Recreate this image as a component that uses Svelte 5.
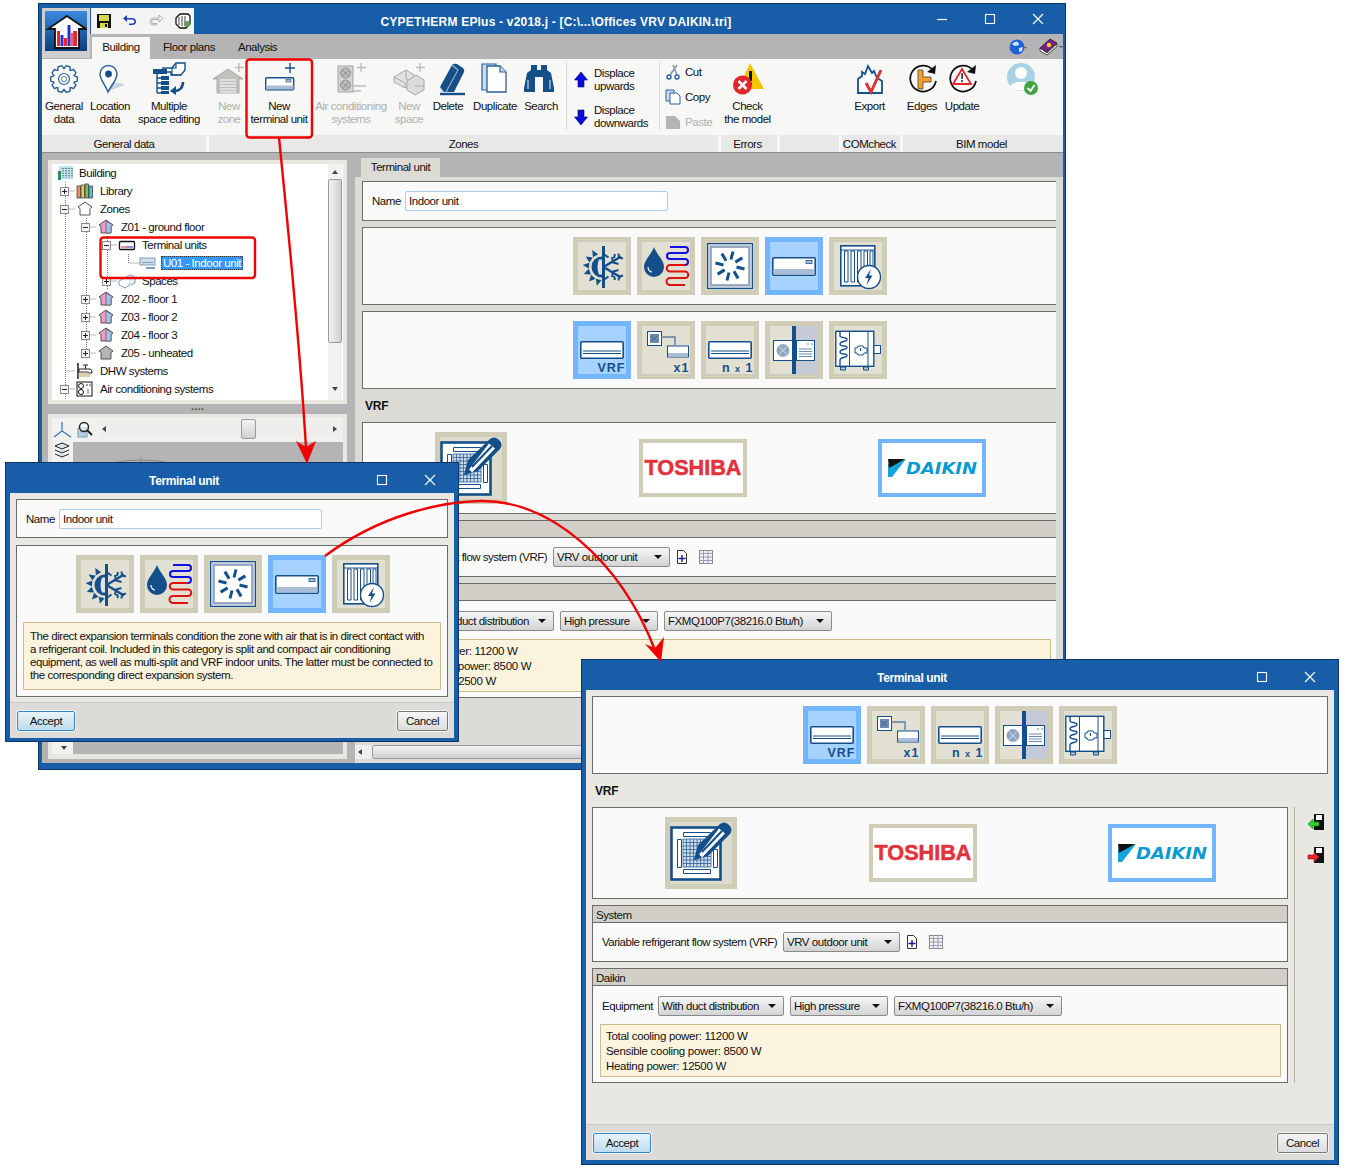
<script>
  const B = '#154f8a';
  const tree = [
    { x: 0, exp: '', icon: 'bld', text: 'Building' },
    { x: 1, exp: '+', icon: 'lib', text: 'Library' },
    { x: 1, exp: '-', icon: 'home', text: 'Zones' },
    { x: 2, exp: '-', icon: 'pink', text: 'Z01 - ground floor' },
    { x: 3, exp: '-', icon: 'term', text: 'Terminal units' },
    { x: 4, exp: '', icon: 'vrf', text: 'U01 - Indoor unit', sel: true },
    { x: 3, exp: '+', icon: 'cube', text: 'Spaces' },
    { x: 2, exp: '+', icon: 'pink', text: 'Z02 - floor 1' },
    { x: 2, exp: '+', icon: 'pink', text: 'Z03 - floor 2' },
    { x: 2, exp: '+', icon: 'pink', text: 'Z04 - floor 3' },
    { x: 2, exp: '+', icon: 'grey', text: 'Z05 - unheated' },
    { x: 1, exp: '', icon: 'tap', text: 'DHW systems' },
    { x: 1, exp: '-', icon: 'ac', text: 'Air conditioning systems' }
  ];

  // teeth of the gear on the ribbon
  function gearPath(cx, cy, r1, r2, n) {
    let d = '';
    for (let i = 0; i < n; i++) {
      const a = (i * 2 * Math.PI) / n;
      const w = Math.PI / n;
      const pts = [[a - w * 0.95, r1], [a - w * 0.5, r2], [a + w * 0.5, r2], [a + w * 0.95, r1]];
      for (const [t, r] of pts) {
        d += (d ? 'L' : 'M') + (cx + r * Math.cos(t)).toFixed(1) + ' ' + (cy + r * Math.sin(t)).toFixed(1);
      }
    }
    return d + 'z';
  }
  const blades = [0, 45, 90, 135, 180, 225, 270, 315];
  const rays = [-165, -138, -111, -84, -57, -30];
</script>

{#snippet gear()}
  <path d={gearPath(20, 19, 10.5, 13.5, 10)} fill="#fff" stroke="#2b6196" stroke-width="1.4" stroke-linejoin="round" />
  <circle cx="20" cy="19" r="5.5" fill="none" stroke="#2b6196" stroke-width="1.2" />
  <circle cx="20" cy="19" r="2.6" fill="none" stroke="#7f9fc0" stroke-width="1.2" />
{/snippet}
{#snippet pin()}
  <path d="M18 31 L35 25 Q30 22 24 23z" fill="#c9d3dd" />
  <path d="M18 32 C15 24 10 20 10 14 a8.500 8.500 0 0 1 17 0 C27 20 22 24 18 32z" fill="#fff" stroke="#2b6196" stroke-width="1.5" />
  <circle cx="18.500" cy="14" r="3.400" fill={B} />
{/snippet}
{#snippet multi()}
  <path d="M14 8h9l4-5h9v7l-4 5H22v-3h-8z" fill="#fff" stroke={B} stroke-width="1.4" />
  <path d="M23 8v7h9M27 3v5h-4" fill="none" stroke={B} stroke-width="1.2" />
  <path d="M4 9h14v5H4z" fill={B} />
  <path d="M8 14v19M8 18h7M8 23h7M8 28h7M8 33h7" stroke={B} stroke-width="1.4" fill="none" />
  <path d="M12 16h8v4h-8zM12 21h8v4h-8zM12 26h8v4h-8zM12 31h8v3h-8z" fill={B} />
  <path d="M34 22c0 6-4 9-9 9" fill="none" stroke={B} stroke-width="2.6" />
  <path d="M27 26l-6 5 6 4z" fill={B} />
{/snippet}
{#snippet newZone()}
  <path d="M19 9L4 19h4v14h22V19h4z" fill="#c0c0bc" stroke="#a9a9a6" />
  <path d="M11 20h16M11 23h16M11 26h16M11 29h16M11 32h16" stroke="#fff" stroke-width="1.2" />
  <path d="M30 3v9M26 7.500h9" stroke="#bcbcbc" stroke-width="1.4" fill="none" />
{/snippet}
{#snippet newUnit()}
  <path d="M31 3v10M26 8h10" stroke={B} stroke-width="1.4" fill="none" />
  <rect x="6.700" y="17.700" width="28" height="12" rx="1" fill="#fff" stroke={B} stroke-width="1.400" />
  <rect x="7" y="25.500" width="27.500" height="4" fill="#a9bdd6" />
  <rect x="27" y="19.500" width="5" height="2.500" fill="#a9bdd6" stroke={B} stroke-width=".6" />
{/snippet}
{#snippet acSys()}
  <rect x="7" y="6" width="15" height="26" fill="#d4d4d2" stroke="#a6a6a4" />
  <circle cx="14.500" cy="13" r="5" fill="#bcbcba" stroke="#8f8f8d" />
  <circle cx="14.500" cy="25" r="5" fill="#bcbcba" stroke="#8f8f8d" />
  <path d="M11 10l7 6M18 10l-7 6M11 22l7 6M18 22l-7 6" stroke="#8f8f8d" />
  <path d="M22 26h13M22 31h8M30 3v9M26 7.500h9" stroke="#bcbcbc" stroke-width="1.300" fill="none" />
{/snippet}
{#snippet newSpace()}
  <path d="M5 17l12-7 8 5 0 7-9 6-11-6z" fill="#e2e2e0" stroke="#a9a9a7" />
  <path d="M17 10v9l8 4M5 17l11 6v5" fill="none" stroke="#a9a9a7" />
  <path d="M18 21l9-6 8 5v10l-9 5-8-5z" fill="#dcdcda" stroke="#a9a9a7" />
  <path d="M26 26h9" stroke="#a9a9a7" />
  <path d="M31 3v9M27 7.500h9" stroke="#bcbcbc" stroke-width="1.300" fill="none" />
{/snippet}
{#snippet eraser()}
  <path d="M12 27L24 5q2-2 5-1l6 4q2 2 1 4L26 32H14z" fill={B} />
  <path d="M24 5l6 5-12 22" fill="none" stroke="#8fb0d0" stroke-width="1.200" />
  <path d="M12 27l4 5h-4z" fill="#dfe6ee" />
  <path d="M12 34h25" stroke={B} stroke-width="2.400" />
{/snippet}
{#snippet dupl()}
  <path d="M7 4h14v26H7z" fill="#c9dcef" stroke="#2b6196" stroke-width="1.200" />
  <path d="M12 6h13l6 6v20H12z" fill="#fff" stroke="#2b6196" stroke-width="1.300" />
  <path d="M25 6v6h6" fill="#c9dcef" stroke="#2b6196" stroke-width="1.200" />
{/snippet}
{#snippet binoc()}
  <path d="M10 5h6v5h4V5h6v5l4 3 3 15v4H22V17h-8v15H3v-4l3-15 4-3z" fill={B} />
  <path d="M7 20v9M29 20v9" stroke="#7fa3c9" stroke-width="2" />
{/snippet}
{#snippet check()}
  <path d="M22 3L36 29H10z" fill="#f5c400" />
  <path d="M21 11h3v10h-3zM21 23h3v3h-3z" fill="#111" />
  <circle cx="14.500" cy="25" r="9.500" fill="#e4252b" />
  <path d="M10.500 21l8 8M18.500 21l-8 8" stroke="#fff" stroke-width="2.600" />
{/snippet}
{#snippet exportIc()}
  <path d="M8 33V19l4-3v-4l3 2 3-8 4 7 2-2 3 7 5 3v12z" fill="#fff" stroke={B} stroke-width="1.800" />
  <path d="M16 23l5 9 10-22" fill="none" stroke="#d9363a" stroke-width="3" />
{/snippet}
{#snippet edges()}
  <g transform="translate(-2 0)">
    <path d="M33 10a13 13 0 1 0 3 11" fill="none" stroke="#111" stroke-width="1.700" />
    <path d="M36 5l-1 9-8-2z" fill="#111" />
    <path d="M18 10h5v7h8v5h-8v7h-5z" fill="#f4a11d" stroke="#444" stroke-width=".8" />
  </g>
{/snippet}
{#snippet updateIc()}
  <g transform="translate(-2 0)">
    <path d="M33 10a13 13 0 1 0 3 11" fill="none" stroke="#111" stroke-width="1.700" />
    <path d="M36 5l-1 9-8-2z" fill="#111" />
    <path d="M22 9l9 15H13z" fill="#fff" stroke="#e4252b" stroke-width="1.800" />
    <path d="M21.200 13h1.800v6h-1.800zM21.200 20h1.800v2h-1.800z" fill="#444" />
  </g>
{/snippet}
{#snippet userIc()}
  <circle cx="20" cy="17" r="14" fill="#a8d3e6" />
  <circle cx="20" cy="13" r="6" fill="#fff" />
  <path d="M9 27c2-7 20-7 22 0q-11 7-22 0z" fill="#fff" />
  <circle cx="30" cy="28" r="7" fill="#3fa63f" />
  <path d="M26.500 28l3 3 4-6" fill="none" stroke="#fff" stroke-width="1.800" />
{/snippet}

{#snippet climate()}
  {#each rays as a}
    <path d="M24 5.500l-3 6.500h6z" transform="rotate({a} 24 25)" fill={B} />
  {/each}
  <path d="M24 14.500a10.500 10.500 0 0 0 0 21z" fill={B} />
  <path d="M21 17.500q-3 7.500 0 15h3v-15z" fill="#dfe3e6" />
  <path d="M25.500 4v42" stroke={B} stroke-width="3" />
  <path d="M25.500 25L43 14.500M25.500 25L43 35.500" stroke={B} stroke-width="2.400" fill="none" />
  <path d="M25.500 12l5 3.500M25.500 38l5-3.500M34 15l1 5.500 5.500 1.500M37 12l-1 4M34 35l1-5.500 5.500-1.500M37 38l-1-4M40.500 11.500l.5 4 4 1M40.500 38.500l.5-4 4-1" stroke={B} stroke-width="2" fill="none" />
{/snippet}
{#snippet water()}
  <path d="M12 5C9 13 2 18 2 25a10 10 0 0 0 20 0C22 18 15 13 12 5z" fill={B} />
  <path d="M6 25c0 3 2 5 4 5" fill="none" stroke="#fff" stroke-width="1.200" />
  <path d="M28 5h15a2.800 2.800 0 0 1 0 6H28a2.800 2.800 0 0 0 0 6h15a2.800 2.800 0 0 1 0 6" fill="none" stroke="#1010e0" stroke-width="2" />
  <path d="M43 23H28a2.800 2.800 0 0 0 0 6.500h15a2.800 2.800 0 0 1 0 6.500H28a2.800 2.800 0 0 0 0 7h15" fill="none" stroke="#e01010" stroke-width="2" />
{/snippet}
{#snippet fan()}
  <rect x="1.500" y="1.500" width="45" height="45" fill="#c4cedb" stroke={B} stroke-width="1.200" />
  <rect x="5" y="5" width="38" height="38" fill="#fff" stroke="#7f97b5" stroke-width="1.500" />
  {#each blades as a}
    <path d="M25 17.500L27 9.500" transform="rotate({a} 24 24)" stroke={B} stroke-width="3" fill="none" />
  {/each}
{/snippet}
{#snippet unit()}
  <rect x="2.800" y="15.800" width="42.400" height="17.400" rx="1" fill="#fff" stroke={B} stroke-width="1.600" />
  <rect x="3.500" y="27" width="41" height="5.500" fill="#a9bdd6" />
  <rect x="36" y="18.500" width="6" height="3" fill="#a9bdd6" stroke={B} stroke-width=".8" />
{/snippet}
{#snippet radiator()}
  <rect x="6.800" y="3.800" width="34" height="40" fill="#fff" stroke={B} stroke-width="1.600" />
  <path d="M7 8h33" stroke={B} />
  <path d="M10.500 9h3.500v31h-3.500zM17 9h3.500v31H17zM23.500 9H27v31h-3.500zM30 9h3.500v31H30zM36 9h3v31h-3z" fill="#fff" stroke={B} />
  <circle cx="35" cy="35" r="11.500" fill="#fff" stroke={B} stroke-width="1.400" />
  <path d="M37 27l-6 9h3.500l-2 7 6-9.500H35z" fill={B} />
{/snippet}
{#snippet wallUnit(y = 15)}
  <rect x="2.800" y={y + 0.8} width="42.400" height="16.400" rx="1" fill="#fff" stroke={B} stroke-width="1.600" />
  <path d="M5 {y + 10}h38M5 {y + 12.500}h38" stroke={B} />
{/snippet}
{#snippet vrfIc()}
  {@render wallUnit()}
  <text x="47.500" y="45.500" class="tag">VRF</text>
{/snippet}
{#snippet x1()}
  <rect x="5.500" y="5.500" width="14" height="14" fill="#fff" stroke={B} />
  <rect x="8" y="8" width="9" height="9" fill="#6b8ab0" />
  <path d="M9 10l6 5M15 10l-6 5" stroke="#3f5f85" stroke-width=".8" />
  <path d="M19 11h14v8" fill="none" stroke="#5f7f9f" stroke-width="1.400" />
  <rect x="25.500" y="20" width="21" height="11" fill="#fff" stroke={B} />
  <rect x="26" y="27" width="20" height="3.500" fill="#a9bdd6" />
  <text x="47.500" y="45.500" class="tag">x1</text>
{/snippet}
{#snippet nx1()}
  {@render wallUnit()}
  <text x="47.500" y="45.500" class="tag">n <tspan class="small">x</tspan> 1</text>
{/snippet}
{#snippet split()}
  <rect x="26" y="0" width="22" height="48" fill="#c6c9d6" />
  <rect x="3.500" y="14.500" width="19" height="20" fill="#fff" stroke={B} />
  <circle cx="13" cy="24.500" r="6.500" fill="#8fa6c2" />
  <path d="M9 20.500l8 8M17 20.500l-8 8" stroke="#d8e2ee" />
  <rect x="26.500" y="14.500" width="18" height="20" fill="#fff" stroke={B} />
  <path d="M29 23h13M29 25.500h13M29 28h13M29 30.500h13M37 18h2M41 18h2" stroke="#6b8ab0" />
  <rect x="22" y="0" width="4" height="48" fill={B} />
{/snippet}
{#snippet pump()}
  <rect x="1.800" y="5.300" width="38" height="35" fill="#fff" stroke={B} stroke-width="1.400" />
  <path d="M15.500 5v35M34 5v35" stroke={B} />
  <path d="M6 6v4c0 2 7 1 7 3.500S6 15 6 18s7 1 7 3.500S6 23 6 26s7 1 7 3.500S6 31 6 34v6" fill="none" stroke={B} stroke-width="1.400" />
  <rect x="40" y="19.500" width="6.500" height="8" fill="#fff" stroke={B} />
  <path d="M21 22h2l1-2h5l1 2h3v5h-3l-1 2h-5l-1-2h-2z" fill="#fff" stroke={B} />
  <path d="M26.500 22v3" stroke={B} stroke-width="1.200" />
  <path d="M6.500 41h5v3h-5zM29.500 41h5v3h-5z" fill="#b9c6d6" stroke={B} />
{/snippet}
{#snippet tile(icon, on = false)}
  <div class="tile" class:on>
    <svg width="48" height="48" viewBox="0 0 48 48">{@render icon()}</svg>
  </div>
{/snippet}

{#snippet rbtn(w, l1, l2, icon, off = false)}
  <div class="rbtn" class:off style:width="{w}px">
    {#if icon}<svg width="40" height="40" viewBox="0 0 40 40">{@render icon()}</svg>{/if}
    <span>{l1}</span>
    {#if l2}<span>{l2}</span>{/if}
  </div>
{/snippet}
{#snippet rgroup(w, label, body)}
  <div class="rgroup" style:width="{w}px">
    <div class="rbody">{@render body?.()}</div>
    <div class="rlabel">{label}</div>
  </div>
{/snippet}

{#snippet treeIcon(k)}
  <svg width="18" height="16" viewBox="0 0 18 16">
    {#if k === 'bld'}
      <rect x="2" y="1" width="14" height="13" fill="#bfe3ef" />
      <path d="M6 3v10M9 3v10M12 3v10M15 3v10" stroke="#222" stroke-dasharray="1 1.400" />
      <path d="M1 6h3v9H1z" fill="#2f8f5a" />
    {:else if k === 'lib'}
      <rect x="1" y="3" width="3.500" height="12" fill="#ef8f6a" stroke="#333" stroke-width=".7" />
      <rect x="5" y="2" width="3.500" height="13" fill="#f2c94c" stroke="#333" stroke-width=".7" />
      <rect x="9" y="1" width="3.500" height="14" fill="#6fc36f" stroke="#333" stroke-width=".7" />
      <rect x="13" y="3" width="3.500" height="12" fill="#4fc5c0" stroke="#333" stroke-width=".7" />
    {:else if k === 'home' || k === 'pink' || k === 'grey'}
      <path d="M9 1l7 5-2 1.500V14H4V7.500L2 6z" fill={k === 'home' ? '#fff' : k === 'grey' ? '#b4b4b4' : '#f59ac0'} stroke="#444" stroke-width=".9" />
      {#if k === 'pink'}<path d="M9 2v12h5V7.500l2-1.500z" fill="#9ec4ea" stroke="#444" stroke-width=".6" />{/if}
    {:else if k === 'term'}
      <rect x="1.500" y="4.500" width="15" height="8" rx="1" fill="#fff" stroke="#111" stroke-width="1.300" />
      <path d="M3 10h5" stroke="#d22" /><path d="M8 10h7" stroke="#22a" />
    {:else if k === 'vrf'}
      <rect x="1" y="3" width="15" height="7" fill="#cfdbe8" stroke="#7f9fc0" />
      <path d="M3 7.500h11" stroke="#7f9fc0" />
      <path d="M7 12h9v2H7z" fill="#7f9fc0" />
    {:else if k === 'cube'}
      <path d="M1 8l6-3 5 2v5l-5 3-6-3z" fill="#fff" stroke="#7f9fc0" />
      <path d="M8 4l5-2 4 2v6l-4 2" fill="#e8eef5" stroke="#7f9fc0" />
    {:else if k === 'tap'}
      <path d="M2 0v16" stroke="#222" stroke-width="1.600" />
      <path d="M3 6h11q2 0 2 4H13q0-1-2-1H3z" fill="#fff" stroke="#222" />
      <path d="M7 2h5M9.500 2v4" stroke="#222" />
      <path d="M2 11h12M2 13h12" stroke="#b7a055" />
    {:else}
      <rect x="1" y="1" width="15" height="14" fill="#fff" stroke="#111" />
      <circle cx="5" cy="5" r="2.500" fill="none" stroke="#111" />
      <circle cx="5" cy="11" r="2.500" fill="none" stroke="#111" />
      <path d="M10 4h2" stroke="#22c" /><path d="M13 4h2" stroke="#d22" />
      <path d="M12 8v5" stroke="#666" />
    {/if}
  </svg>
{/snippet}

{#snippet fieldName()}
  <div class="fs namerow">
    <span class="namelab">Name</span>
    <div class="input">Indoor unit</div>
  </div>
{/snippet}
{#snippet dropdown(w, text)}
  <div class="dd" style:width="{w}px"><span>{text}</span><i></i></div>
{/snippet}
{#snippet kindTiles()}
  <div class="tiles">
    {@render tile(climate)}
    {@render tile(water)}
    {@render tile(fan)}
    {@render tile(unit, true)}
    {@render tile(radiator)}
  </div>
{/snippet}
{#snippet editTile()}
  <div class="tile big">
    <svg width="62" height="62" viewBox="0 0 62 62">
      <rect x="1.500" y="5.500" width="49" height="52" fill="#fff" stroke={B} stroke-width="2.600" />
      <path d="M13.500 10.500h27v4h-27zM7.500 17.500h4v28h-4zM43.500 27.500h4v18h-4zM13.500 47.500h27v4h-27z" fill="#fff" stroke={B} />
      <g stroke="#2a5f99" stroke-width=".8">
        <path d="M13 17h28v28H13z" fill="#cfdbe8" />
        <path d="M16.500 17v28M20 17v28M23.500 17v28M27 17v28M30.500 17v28M34 17v28M37.500 17v28M13 20.500h28M13 24h28M13 27.500h28M13 31h28M13 34.500h28M13 38h28M13 41.500h28" />
      </g>
      <path d="M24 38l4-15L50 2q4-3 8 0l2 2q3 4 0 8L38 34z" fill={B} />
      <path d="M29 32.500l3 3 23-24-6-5z" fill="#fff" />
      <path d="M32 30L52 9" stroke={B} stroke-width="2" />
      <path d="M24 38l2.500-8 5 5z" fill={B} />
    </svg>
  </div>
{/snippet}
{#snippet vrfBody()}
  <div class="fs tilebox">
    <div class="tiles">
      {@render tile(vrfIc, true)}
      {@render tile(x1)}
      {@render tile(nx1)}
      {@render tile(split)}
      {@render tile(pump)}
    </div>
  </div>
  <div class="vrflabel">VRF</div>
  <div class="lower">
    <div class="lowermain">
      <div class="fs brands">
        {@render editTile()}
        <div class="tile wide">
          <svg width="100" height="50" viewBox="0 0 100 50">
            <text x="50" y="32" class="toshiba" textLength="97" lengthAdjust="spacingAndGlyphs">TOSHIBA</text>
          </svg>
        </div>
        <div class="tile wide on white">
          <svg width="100" height="50" viewBox="0 0 100 50">
            <path d="M6 34V21l18-5L10 34z" fill="#12a4d8" /><path d="M6 16h17L7 25z" fill="#111" />
            <text x="24" y="31" class="daikin" textLength="71" lengthAdjust="spacingAndGlyphs">DAIKIN</text>
          </svg>
        </div>
      </div>
      <div class="section first">System</div>
      <div class="secbody sysrow">
        <span class="lab">Variable refrigerant flow system (VRF)</span>
        {@render dropdown(117, 'VRV outdoor unit')}
        <svg class="mini" width="14" height="16" viewBox="0 0 14 16">
          <path d="M2.500 1.500h6l3 3v10h-9z" fill="#fff" stroke="#333" />
          <path d="M7 6v7M3.500 9.500h7" stroke="#17179a" stroke-width="1.400" />
        </svg>
        <svg class="mini" width="16" height="16" viewBox="0 0 16 16">
          <rect x="1.500" y="1.500" width="13" height="13" fill="#f5f2ec" stroke="#8a8a8a" />
          <path d="M1.500 4.500h13M1.500 8h13M1.500 11.500h13M5.500 1.500v13M10 1.500v13" stroke="#9a9ac8" />
        </svg>
      </div>
      <div class="section">Daikin</div>
      <div class="secbody eqbody">
        <div class="eqrow">
          <span class="lab eq">Equipment</span>
          {@render dropdown(126, 'With duct distribution')}
          {@render dropdown(98, 'High pressure')}
          {@render dropdown(168, 'FXMQ100P7(38216.0 Btu/h)')}
        </div>
        <div class="note specs">
          <div>Total cooling power: 11200 W</div>
          <div>Sensible cooling power: 8500 W</div>
          <div>Heating power: 12500 W</div>
        </div>
      </div>
    </div>
    <div class="sidebar">
      <svg width="18" height="18" viewBox="0 0 18 18">
        <path d="M7 1h10v16H7z" fill="#111" /><path d="M9 2h6v5H9z" fill="#fff" />
        <path d="M1 11l5-5v3h6v4H6v3z" fill="#2bd12b" stroke="#1a7a1a" stroke-width=".6" />
      </svg>
      <svg width="18" height="18" viewBox="0 0 18 18">
        <path d="M7 1h10v16H7z" fill="#111" /><path d="M9 2h6v5H9z" fill="#fff" />
        <path d="M12 11L7 6v3H1v4h6v3z" fill="#ee2222" stroke="#8a1010" stroke-width=".6" />
      </svg>
    </div>
  </div>
{/snippet}
{#snippet winBtns()}
  <div class="ctl">
    <svg width="48" height="14" viewBox="0 0 48 14"><rect x="19.500" y="2.500" width="9" height="9" fill="none" stroke="#fff" stroke-width="1.100" /></svg>
    <svg width="48" height="14" viewBox="0 0 48 14"><path d="M19 2l10 10M29 2L19 12" stroke="#fff" stroke-width="1.200" /></svg>
  </div>
{/snippet}
{#snippet footer()}
  <div class="foot">
    <div class="btn ok">Accept</div>
    <div class="btn">Cancel</div>
  </div>
{/snippet}

<div class="desk">
  <div class="win main">
    <div class="title maintitle">
      <span class="ttext">CYPETHERM EPlus - v2018.j - [C:\...\Offices VRV DAIKIN.tri]</span>
      <div class="ctl three">
        <svg width="48" height="14" viewBox="0 0 48 14"><path d="M19 7.500h10" stroke="#fff" stroke-width="1.200" /></svg>
        <svg width="48" height="14" viewBox="0 0 48 14"><rect x="19.500" y="2.500" width="9" height="9" fill="none" stroke="#fff" stroke-width="1.100" /></svg>
        <svg width="48" height="14" viewBox="0 0 48 14"><path d="M19 2l10 10M29 2L19 12" stroke="#fff" stroke-width="1.200" /></svg>
      </div>
    </div>
    <div class="appicon">
      <svg width="42" height="40" viewBox="0 0 42 40">
        <defs>
          <linearGradient id="appbg" x1="0" y1="0" x2="0" y2="1">
            <stop offset="0" stop-color="#3a8ae0" /><stop offset="1" stop-color="#0c3c80" />
          </linearGradient>
        </defs>
        <rect width="42" height="40" fill="url(#appbg)" />
        <path d="M22 5L3 18h7v19h24V18h7z" fill="#fff" stroke="#111" stroke-width="1.800" />
        <path d="M12 20h3v15h-3zM19 27h3v8h-3zM28 20h4v15h-4z" fill="#e8262b" />
        <path d="M15.500 24h3v11h-3zM22.500 14h3v21h-3z" fill="#2130d8" />
        <path d="M25.500 22h3v13h-3z" fill="#e05a8a" />
      </svg>
    </div>
    <div class="qat">
      <svg width="16" height="16" viewBox="0 0 16 16"><path d="M1 1h14v14H1z" fill="#111" /><path d="M3 2h10v6H3z" fill="#d8d84a" /><path d="M4 10h8v5H4z" fill="#d8d84a" /><path d="M9 11h2v3H9z" fill="#111" /></svg>
      <svg width="16" height="16" viewBox="0 0 16 16"><path d="M5 5h5q4 0 4 3.500T10 12H7v-1.500h3q2.500 0 2.500-2T10 6.500H5V9L1 5.500 5 2z" fill="#1a3fc0" /></svg>
      <svg width="16" height="16" viewBox="0 0 16 16"><path d="M11 5H6Q2 5 2 8.500T6 12h3v-1.500H6q-2.500 0-2.500-2T6 6.500h5V9l4-3.500L11 2z" fill="none" stroke="#a8a8a8" stroke-width=".9" /></svg>
      <svg width="18" height="18" viewBox="0 0 18 18"><path d="M2 6l4-4h8l2 2v8l-4 4H6L2 12z" fill="#fff" stroke="#111" stroke-width="1.300" /><path d="M5 5v8M8 4v10M11 4v10" stroke="#111" stroke-width=".8" /><circle cx="13" cy="12" r="3" fill="#6a9a55" /></svg>
    </div>
    <div class="tabs">
      <div class="tab active">Building</div>
      <div class="tab fp">Floor plans</div>
      <div class="tab an">Analysis</div>
      <div class="help">
        <svg width="18" height="16" viewBox="0 0 18 16"><circle cx="8" cy="8" r="7.500" fill="#1d62d8" /><path d="M3 5q3-3 6-2l1 3-4 1zM10 9l4-1-1 4-3 1z" fill="#cfe6ff" /><path d="M15 8h3l-1.500 1.500z" fill="#555" /></svg>
        <svg width="24" height="18" viewBox="0 0 24 18"><path d="M1 10l10-9 7 4-10 9z" fill="#7a1b8f" stroke="#222" stroke-width=".8" /><path d="M1 10l7 5 10-9v2.500L8 17l-7-4z" fill="#fff" stroke="#222" stroke-width=".8" /><circle cx="10" cy="7" r="2.200" fill="#f2d21b" /><path d="M20 8h4l-2 2z" fill="#555" /></svg>
      </div>
    </div>
    <div class="ribbon">
      {#snippet genBody()}
        {@render rbtn(44, 'General', 'data', gear)}
        {@render rbtn(48, 'Location', 'data', pin)}
        {@render rbtn(70, 'Multiple', 'space editing', multi)}
      {/snippet}
      {#snippet zoneBody()}
        {@render rbtn(40, 'New', 'zone', newZone, true)}
        {@render rbtn(60, 'New', 'terminal unit', newUnit)}
        {@render rbtn(84, 'Air conditioning', 'systems', acSys, true)}
        {@render rbtn(32, 'New', 'space', newSpace, true)}
        {@render rbtn(46, 'Delete', '', eraser)}
        {@render rbtn(48, 'Duplicate', '', dupl)}
        {@render rbtn(44, 'Search', '', binoc)}
        <div class="rsep"></div>
        <div class="displace">
          <div class="ditem">
            <svg width="14" height="18" viewBox="0 0 14 18"><path d="M7 1l6.500 8H10v7H4V9H.5z" fill="#0a0ae0" stroke="#06066a" stroke-width=".6" /></svg>
            <span>Displace<br />upwards</span>
          </div>
          <div class="ditem">
            <svg width="14" height="18" viewBox="0 0 14 18"><path d="M7 17l6.500-8H10V2H4v7H.5z" fill="#0a0ae0" stroke="#06066a" stroke-width=".6" /></svg>
            <span>Displace<br />downwards</span>
          </div>
        </div>
        <div class="rsep"></div>
        <div class="clip">
          <div class="citem">
            <svg width="16" height="16" viewBox="0 0 16 16"><path d="M12 1L5 11M8 1l4 10" stroke="#7f8fa0" stroke-width="1.400" /><circle cx="4" cy="13" r="2" fill="none" stroke="#2b6196" stroke-width="1.400" /><circle cx="12" cy="13" r="2" fill="none" stroke="#2b6196" stroke-width="1.400" /></svg>
            <span>Cut</span>
          </div>
          <div class="citem">
            <svg width="16" height="16" viewBox="0 0 16 16"><path d="M1 1h8v11H1z" fill="#c9dcef" stroke="#2b6196" /><path d="M5 4h7l3 3v8H5z" fill="#fff" stroke="#2b6196" /></svg>
            <span>Copy</span>
          </div>
          <div class="citem off">
            <svg width="16" height="16" viewBox="0 0 16 16"><path d="M1 2h9l5 5v8H1z" fill="#b4b4b4" /></svg>
            <span>Paste</span>
          </div>
        </div>
      {/snippet}
      {#snippet errBody()}
        {@render rbtn(53, 'Check', 'the model', check)}
      {/snippet}
      {#snippet comBody()}
        {@render rbtn(55, 'Export', '', exportIc)}
      {/snippet}
      {#snippet bimBody()}
        {@render rbtn(38, 'Edges', '', edges)}
        {@render rbtn(42, 'Update', '', updateIc)}
        {@render rbtn(76, '', '', userIc)}
      {/snippet}
      {@render rgroup(164, 'General data', genBody)}
      {@render rgroup(509, 'Zones', zoneBody)}
      {@render rgroup(56, 'Errors', errBody)}
      {@render rgroup(59, '')}
      {@render rgroup(58, 'COMcheck', comBody)}
      {@render rgroup(160, 'BIM model', bimBody)}
    </div>
    <div class="body">
      <div class="leftcol">
        <div class="treepanel">
          <div class="tree">
            <svg class="treelines" width="276" height="236" viewBox="0 0 276 236">
              <path d="M13.500 18V236M34.500 54V192M55.500 72V126M13.500 27h10M13.500 45h10M13.500 207h10M13.500 225h10M34.500 63h10M34.500 135h10M34.500 153h10M34.500 171h10M34.500 189h10M55.500 81h10M55.500 117h10M76.500 90v9h12" fill="none" stroke="#777" stroke-dasharray="1 1" />
            </svg>
            {#each tree as row}
              <div class="trow" class:root={row.x === 0} style:padding-left="{row.x * 21 - 13}px">
                <span class="exp">
                  {#if row.exp}<i class="box">{#if row.exp === '+'}<b></b>{/if}</i>{/if}
                </span>
                {@render treeIcon(row.icon)}
                <span class="tlabel" class:sel={row.sel}>{row.text}</span>
              </div>
            {/each}
            <div class="vbar">
              <span class="arr up"></span>
              <div class="vthumb"></div>
              <span class="arr down"></span>
            </div>
          </div>
        </div>
        <div class="splitter">....</div>
        <div class="viewpanel">
          <div class="viewtop">
            <svg width="24" height="20" viewBox="0 0 24 20"><path d="M10 2v9L2 17M10 11l9 6" fill="none" stroke="#3b6ea5" stroke-width="1.200" /></svg>
            <svg width="22" height="20" viewBox="0 0 22 20"><rect x="2" y="8" width="9" height="9" fill="#b9cde2" stroke="#7f9fc0" /><circle cx="8" cy="7" r="4.500" fill="#fff" fill-opacity=".5" stroke="#222" stroke-width="1.400" /><path d="M11 10l5 5" stroke="#222" stroke-width="2" /></svg>
            <div class="hbar">
              <span class="arr left"></span>
              <div class="hthumb"></div>
              <span class="arr right"></span>
            </div>
          </div>
          <div class="viewmain">
            <div class="viewtools">
              <svg width="18" height="16" viewBox="0 0 18 16"><path d="M2 4l7-3 7 3-7 3zM2 8l7 3 7-3M2 12l7 3 7-3" fill="#d9e6f2" stroke="#222" /></svg>
              <span class="arr down bottom"></span>
            </div>
            <div class="viewgrey">
              <svg width="120" height="24" viewBox="0 0 120 24"><path d="M38 21q30-6 60 0M68 15v6" fill="none" stroke="#8a8a8a" /></svg>
            </div>
          </div>
        </div>
      </div>
      <div class="rightcol">
        <div class="paneltabs"><div class="ptab">Terminal unit</div></div>
        <div class="panel">
          <div class="scrollclip">
            <div class="scrollinner">
              {@render fieldName()}
              <div class="fs tilebox">{@render kindTiles()}</div>
              {@render vrfBody()}
            </div>
          </div>
          <div class="hbar bottom">
            <span class="arr left"></span>
            <div class="hthumb long"></div>
          </div>
        </div>
      </div>
    </div>
  </div>

  <div class="win dlg one">
    <div class="title">
      <span class="ttext">Terminal unit</span>
      {@render winBtns()}
    </div>
    <div class="dbody">
      {@render fieldName()}
      <div class="fs descbox">
        {@render kindTiles()}
        <div class="note desc">The direct expansion terminals condition the zone with air that is in direct contact with<br />a refrigerant coil. Included in this category is split and compact air conditioning<br />equipment, as well as multi-split and VRF indoor units. The latter must be connected to<br />the corresponding direct expansion system.</div>
      </div>
    </div>
    {@render footer()}
  </div>

  <div class="win dlg two">
    <div class="title">
      <span class="ttext">Terminal unit</span>
      {@render winBtns()}
    </div>
    <div class="dbody">
      {@render vrfBody()}
    </div>
    {@render footer()}
  </div>

  <svg class="marks" width="1345" height="1171" viewBox="0 0 1345 1171">
    <rect x="246.500" y="59.500" width="65.500" height="78" rx="3" />
    <rect x="100.500" y="237.500" width="154.500" height="40.500" rx="3" />
    <path d="M279 137C287 220 299 330 306 448" />
    <polygon points="296,441 306,447 316,441 307,464" />
    <path d="M325 556C380 515 440 502 480 501C550 500 620 560 655 650" />
    <polygon points="645,644 655,648 664,637 661,662" />
  </svg>
</div>

<style>
  :global(body) { margin: 0; background: #fff; }
  .desk {
    position: relative;
    width: 1345px;
    height: 1171px;
    overflow: hidden;
    font: 11.5px/14px "Liberation Sans", Arial, sans-serif;
    letter-spacing: -0.45px;
    color: #111;
    background: #fff;
  }
  svg { display: block; flex: none; }
  .win {
    position: absolute;
    box-sizing: border-box;
    display: flex;
    flex-direction: column;
    background: #175da7;
    border: 1px solid #0b3564;
  }
  .main { left: 38px; top: 3px; width: 1028px; height: 767px; padding: 0 2px 6px 3px; }
  .one { left: 5px; top: 462px; width: 454px; height: 280px; padding: 0 4px 3px; }
  .two { left: 581px; top: 659px; width: 758px; height: 506px; padding: 0 4px 4px; }

  .title { display: flex; height: 30px; flex: none; align-items: center; color: #fff; font-weight: bold; font-size: 12px; letter-spacing: -0.35px; }
  .ttext { flex: 1; text-align: center; padding-top: 6px; }
  .ctl { display: flex; padding-top: 4px; }
  .maintitle { padding-left: 152px; margin-right: -2px; letter-spacing: 0.2px; }
  .ctl.three { margin-right: 3px; padding-top: 0; }

  .appicon { position: absolute; left: 3px; top: 4px; padding: 3px 3px 7px; background: #cfcfcf; z-index: 2; }
  .qat {
    position: absolute;
    left: 52px;
    top: 4px;
    width: 103px;
    height: 26px;
    background: #f4f4f2;
    display: flex;
    align-items: center;
    gap: 10px;
    padding-left: 5px;
    box-sizing: border-box;
    z-index: 2;
  }
  .tabs { display: flex; height: 25px; flex: none; background: #b4b4b4; padding-left: 50px; align-items: flex-end; position: relative; }
  .tab { height: 22px; line-height: 20px; padding: 0 9px; box-sizing: border-box; }
  .tab.active { background: #f7f7f5; width: 58px; text-align: center; padding: 0; }
  .tab.fp { margin-left: 4px; }
  .tab.an { margin-left: 5px; }
  .help { margin-left: auto; display: flex; gap: 12px; align-self: center; align-items: center; }

  .ribbon { display: flex; gap: 3px; height: 93px; flex: none; background: #f7f7f5; border-bottom: 1px solid #8c8c8c; box-sizing: content-box; }
  .rgroup { display: flex; flex-direction: column; flex: none; }
  .rbody { height: 76px; display: flex; }
  .rlabel { height: 17px; line-height: 19px; background: #e8e8e6; text-align: center; }
  .rgroup:nth-child(n+3) .rlabel { padding-right: 3px; }
  .rbtn { display: flex; flex-direction: column; align-items: center; flex: none; line-height: 13px; text-align: center; white-space: nowrap; }
  .rbtn svg { margin-top: 1px; }
  .off, .off span { color: #b0b0ae; }
  .rsep { width: 1px; height: 70px; margin: 2px 1px 0 3px; background: #dcdcda; flex: none; }
  .displace { width: 88px; padding: 8px 0 0 6px; box-sizing: border-box; display: flex; flex-direction: column; gap: 11px; line-height: 13px; }
  .ditem { display: flex; gap: 6px; align-items: center; }
  .clip { padding: 5px 0 0 4px; display: flex; flex-direction: column; gap: 9px; }
  .citem { display: flex; gap: 4px; align-items: center; height: 16px; }

  .body { flex: 1; display: flex; background: #b4b4b4; min-height: 0; }
  .leftcol { width: 305px; flex: none; padding: 7px 0 4px 6px; box-sizing: border-box; display: flex; flex-direction: column; }
  .treepanel { height: 244px; flex: none; background: #e9e7e1; padding: 4px; box-sizing: border-box; }
  .tree { position: relative; background: #fff; height: 236px; overflow: hidden; padding-top: 0; }
  .treelines { position: absolute; left: 0; top: 0; }
  .trow { position: relative; display: flex; align-items: center; height: 18px; white-space: nowrap; line-height: 14px; }
  .trow.root { padding-left: 5px !important; }
  .trow.root .exp { width: 0; margin: 0; }
  .trow.root .tlabel { margin-left: 2px; }
  .exp { width: 9px; height: 18px; display: flex; align-items: center; margin-right: 7px; flex: none; }
  .box { display: block; position: relative; width: 9px; height: 9px; box-sizing: border-box; border: 1px solid #8a8a8a; background: #f4f4f4; }
  .box::before { content: ""; position: absolute; left: 1px; right: 1px; top: 3px; height: 1px; background: #223; }
  .box b { position: absolute; top: 1px; bottom: 1px; left: 3px; width: 1px; background: #223; }
  .tlabel { margin-left: 4px; padding: 0 2px; }
  .tlabel.sel { background: #3399ff; color: #fff; outline: 1px dotted #333; outline-offset: -1px; }
  .vbar { position: absolute; right: 1px; top: 0; width: 14px; bottom: 0; background: #f1f1ef; display: flex; flex-direction: column; align-items: center; padding-top: 6px; box-sizing: border-box; }
  .vthumb { width: 14px; height: 164px; margin-top: 5px; box-sizing: border-box; border: 1px solid #9a9a9a; border-radius: 2px; background: linear-gradient(90deg, #f3f3f3, #d0d0d0); }
  .arr { display: block; width: 0; height: 0; border: 3px solid transparent; flex: none; }
  .arr.up { border-bottom: 4px solid #444; border-top: 0; }
  .arr.down { border-top: 4px solid #444; border-bottom: 0; margin-top: 44px; }
  .arr.left { border-right: 4px solid #444; border-left: 0; }
  .arr.right { border-left: 4px solid #444; border-right: 0; }
  .splitter { height: 10px; line-height: 4px; text-align: center; letter-spacing: 0; font-weight: bold; color: #555; width: 299px; }
  .viewpanel { flex: 1; width: 299px; background: #e9e7e1; padding: 4px 4px 5px; box-sizing: border-box; display: flex; flex-direction: column; }
  .viewtop { display: flex; height: 24px; background: #f1f1ef; flex: none; padding-top: 2px; box-sizing: border-box; }
  .hbar { flex: 1; height: 18px; background: #eeeeec; display: flex; align-items: center; padding: 0 6px 0 2px; position: relative; margin-left: 2px; }
  .hthumb { position: absolute; left: 141px; width: 15px; height: 20px; box-sizing: border-box; border: 1px solid #9a9a9a; border-radius: 2px; background: linear-gradient(#f3f3f3, #d0d0d0); }
  .hbar .arr.right { margin-left: auto; }
  .viewmain { flex: 1; display: flex; min-height: 0; }
  .viewtools { width: 21px; background: #f1f1ef; display: flex; flex-direction: column; padding: 0 0 0 1px; box-sizing: border-box; position: relative; }
  .arr.bottom { margin: auto 0 4px 8px; }
  .viewgrey { flex: 1; background: #b4b4b4; }

  .rightcol { flex: 1; display: flex; flex-direction: column; margin-left: 8px; min-width: 0; }
  .paneltabs { height: 24px; flex: none; display: flex; align-items: flex-end; padding-left: 6px; }
  .ptab { background: #dddbd5; height: 19px; width: 79px; text-align: center; line-height: 18px; }
  .panel { flex: 1; background: #dddbd5; display: flex; flex-direction: column; min-height: 0; padding-bottom: 4px; }
  .scrollclip { flex: 1; overflow: hidden; width: 701px; min-height: 0; }
  .scrollinner { width: 736px; padding: 4px 0 0 7px; }
  .hbar.bottom { flex: none; height: 14px; margin: 0; padding-left: 3px; }
  .hthumb.long { left: 17px; width: 400px; height: 14px; }

  .fs { border: 1px solid #6c6c6c; background: #fafafa; box-sizing: border-box; }
  .namerow { height: 40px; display: flex; align-items: center; padding-left: 9px; gap: 5px; }
  .namelab { width: 28px; }
  .input { width: 263px; height: 20px; line-height: 18px; box-sizing: border-box; border: 1px solid #a9cdea; border-radius: 2px; background: #fff; padding-left: 3px; }
  .tilebox { height: 78px; margin-top: 6px; display: flex; align-items: center; justify-content: center; }
  .tiles { display: flex; justify-content: center; gap: 6px; }
  .tile { width: 58px; height: 58px; box-sizing: border-box; border: 5px solid #cfccb8; background: #e1e0d3; flex: none; }
  .tile.on { border-color: #72b6ff; background: #a6d2ff; }
  .tile.big { width: 72px; height: 72px; background: #dcdbce; margin-right: 1px; }
  .tile.wide { width: 108px; height: 58px; border-width: 4px; background: #fff; }
  .tile.on.white { background: #fff; }
  .tag { font: bold 12.5px "Liberation Sans", sans-serif; letter-spacing: 1px; fill: #154f8a; text-anchor: end; }
  .tag .small { font-size: 9px; }
  .toshiba { font: bold 21.5px "Liberation Sans", sans-serif; letter-spacing: 0; fill: #e2323c; stroke: #e2323c; stroke-width: .5; text-anchor: middle; }
  .daikin { font: italic bold 15.5px "DejaVu Sans", sans-serif; letter-spacing: 0; fill: #0a9ad2; }
  .vrflabel { height: 33px; line-height: 34px; padding-left: 3px; font-weight: bold; font-size: 12px; letter-spacing: -0.2px; }
  .lower { display: flex; }
  .lowermain { width: 696px; flex: none; }
  .brands { height: 92px; display: flex; align-items: center; justify-content: center; gap: 131px; padding-left: 1px; }
  .section { margin-top: 6px; height: 18px; box-sizing: border-box; line-height: 18px; padding-left: 3px; background: #d2cfc9; border: 1px solid #6c6c6c; }
  .secbody { border: 1px solid #6c6c6c; border-top: 0; background: #fafafa; box-sizing: border-box; }
  .sysrow { height: 39px; display: flex; align-items: center; padding-left: 9px; }
  .sysrow .lab { width: 175px; margin-right: 6px; white-space: nowrap; letter-spacing: -0.5px; }
  .mini { margin-left: 5px; }
  .sysrow .mini + .mini { margin-left: 9px; }
  .eqbody { height: 97px; padding: 10px 6px 0 7px; }
  .eqrow { display: flex; gap: 6px; align-items: center; padding-left: 2px; }
  .lab.eq { width: 50px; }
  .dd {
    height: 20px;
    box-sizing: border-box;
    border: 1px solid #8a8a8a;
    border-radius: 2px;
    background: linear-gradient(#f7f7f7, #d3d3d3);
    display: flex;
    align-items: center;
    justify-content: space-between;
    padding: 0 7px 0 3px;
    white-space: nowrap;
    flex: none;
  }
  .dd i { border: 4px solid transparent; border-top: 4px solid #111; border-bottom: 0; width: 0; height: 0; }
  .note { background: #fbf3de; border: 1px solid #c9bd85; box-sizing: border-box; }
  .specs { height: 53px; margin-top: 8px; padding: 4px 0 0 5px; line-height: 15px; letter-spacing: -0.3px; }
  .sidebar { margin-left: 6px; padding: 6px 0 0 12px; border-left: 1px solid #b5b3ad; display: flex; flex-direction: column; gap: 15px; }
  .dbody { flex: 1; background: #e9e7e2; padding: 6px 6px 0; min-height: 0; }
  .dbody .namerow { height: 39px; }
  .dbody .tilebox:first-child { margin-top: 0; }
  .descbox { margin-top: 7px; height: 152px; padding: 9px 6px 0; }
  .descbox .tiles { padding-left: 2px; }
  .desc { margin-top: 9px; height: 68px; padding: 7px 0 0 6px; line-height: 13px; white-space: nowrap; overflow: hidden; }
  .foot { height: 35px; flex: none; background: #dddbd7; border-top: 1px solid #c9c7c1; display: flex; justify-content: space-between; align-items: center; padding: 0 6px 0 7px; }
  .btn { height: 20px; min-width: 51px; box-sizing: border-box; border: 1px solid #777; border-radius: 2px; background: linear-gradient(#f6f6f6, #dcdcdc); text-align: center; line-height: 19px; outline: 1px solid #f4f4f2; }
  .btn.ok { min-width: 58px; border-color: #2a86c8; background: linear-gradient(#e9f4fb, #bcdcf0); }

  .marks { position: absolute; left: 0; top: 0; pointer-events: none; }
  .marks rect, .marks path { fill: none; stroke: #f00000; stroke-width: 2.4; }
  .marks polygon { fill: #f00000; }
</style>
